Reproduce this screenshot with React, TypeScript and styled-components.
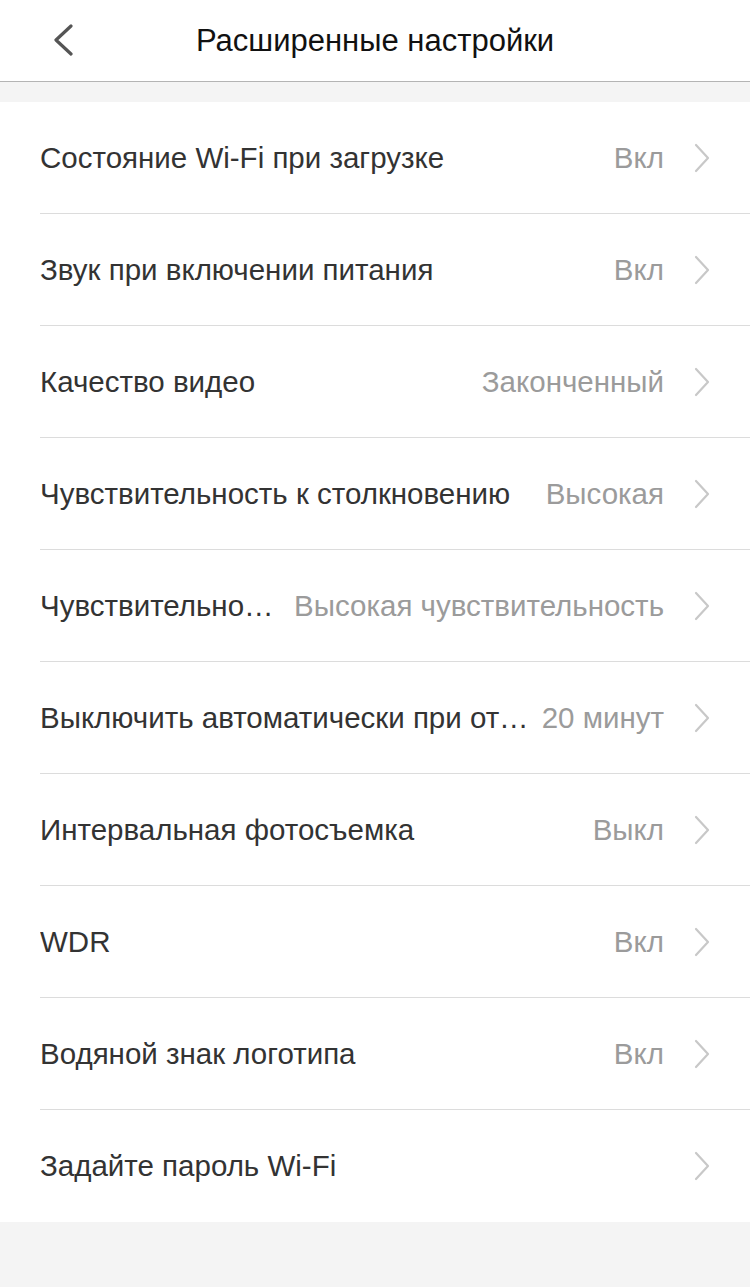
import styled, { createGlobalStyle } from "styled-components";

const GlobalStyle = createGlobalStyle`
    html, body {
        margin: 0;
        padding: 0;
        background: #f4f4f4;
        font-family: "Liberation Sans", Arial, sans-serif;
    }
`

const Page = styled.div`
    width: 750px;
    min-height: 1287px;
    background: #f4f4f4;
`

const Header = styled.div`
    position: relative;
    height: 81px;
    background: #fff;
    border-bottom: 1px solid #b4b4b4;
    display: flex;
    align-items: center;
    justify-content: center;
`

const BackButton = styled.div`
    position: absolute;
    left: 48px;
    top: 22px;
    width: 30px;
    height: 36px;
    display: flex;
    align-items: center;
    justify-content: center;
`

const Title = styled.h1`
    margin: 0;
    font-size: 31px;
    font-weight: 400;
    color: #111;
`

const List = styled.div`
    margin-top: 20px;
    background: #fff;
`

const Row = styled.div<{ $last?: boolean }>`
    height: 112px;
    margin-left: 40px;
    padding-right: 40px;
    box-sizing: border-box;
    display: flex;
    align-items: center;
    border-bottom: ${(p) => (p.$last ? "none" : "1px solid #dcdcdc")};
`

const Label = styled.div`
    flex: 1;
    min-width: 0;
    font-size: 29.5px;
    color: #333;
    white-space: nowrap;
    overflow: hidden;
    text-overflow: ellipsis;
`

const Value = styled.div`
    flex-shrink: 0;
    margin-left: 10px;
    font-size: 29.5px;
    color: #9b9b9b;
    white-space: nowrap;
`

const Arrow = styled.div`
    flex-shrink: 0;
    width: 16px;
    height: 30px;
    margin-left: 30px;
    display: flex;
`

const Chevron = ({ color, w, h }: { color: string; w: number; h: number }) => (
    <svg width={w} height={h} viewBox={`0 0 ${w} ${h}`} fill="none">
        <path
            d={`M2 2 L${w - 2} ${h / 2} L2 ${h - 2}`}
            stroke={color}
            strokeWidth="2.2"
            strokeLinecap="round"
            strokeLinejoin="round"
        />
    </svg>
)

const BackIcon = () => (
    <svg width="22" height="32" viewBox="0 0 22 32" fill="none">
        <path d="M19 2 L4 16 L19 30" stroke="#555" strokeWidth="3.2" strokeLinecap="round" strokeLinejoin="round" />
    </svg>
)

const items = [
    { label: "Состояние Wi-Fi при загрузке", value: "Вкл" },
    { label: "Звук при включении питания", value: "Вкл" },
    { label: "Качество видео", value: "Законченный" },
    { label: "Чувствительность к столкновению", value: "Высокая" },
    { label: "Чувствительность при парковке", value: "Высокая чувствительность" },
    { label: "Выключить автоматически при отсутствии движения", value: "20 минут" },
    { label: "Интервальная фотосъемка", value: "Выкл" },
    { label: "WDR", value: "Вкл" },
    { label: "Водяной знак логотипа", value: "Вкл" },
    { label: "Задайте пароль Wi-Fi", value: "" },
]

export default function App() {
    return (
        <Page>
            <GlobalStyle />
            <Header>
                <BackButton>
                    <BackIcon />
                </BackButton>
                <Title>Расширенные настройки</Title>
            </Header>
            <List>
                {items.map((item, i) => (
                    <Row key={item.label} $last={i === items.length - 1}>
                        <Label>{item.label}</Label>
                        {item.value && <Value>{item.value}</Value>}
                        <Arrow>
                            <Chevron color="#c8c8c8" w={16} h={30} />
                        </Arrow>
                    </Row>
                ))}
            </List>
        </Page>
    )
}
